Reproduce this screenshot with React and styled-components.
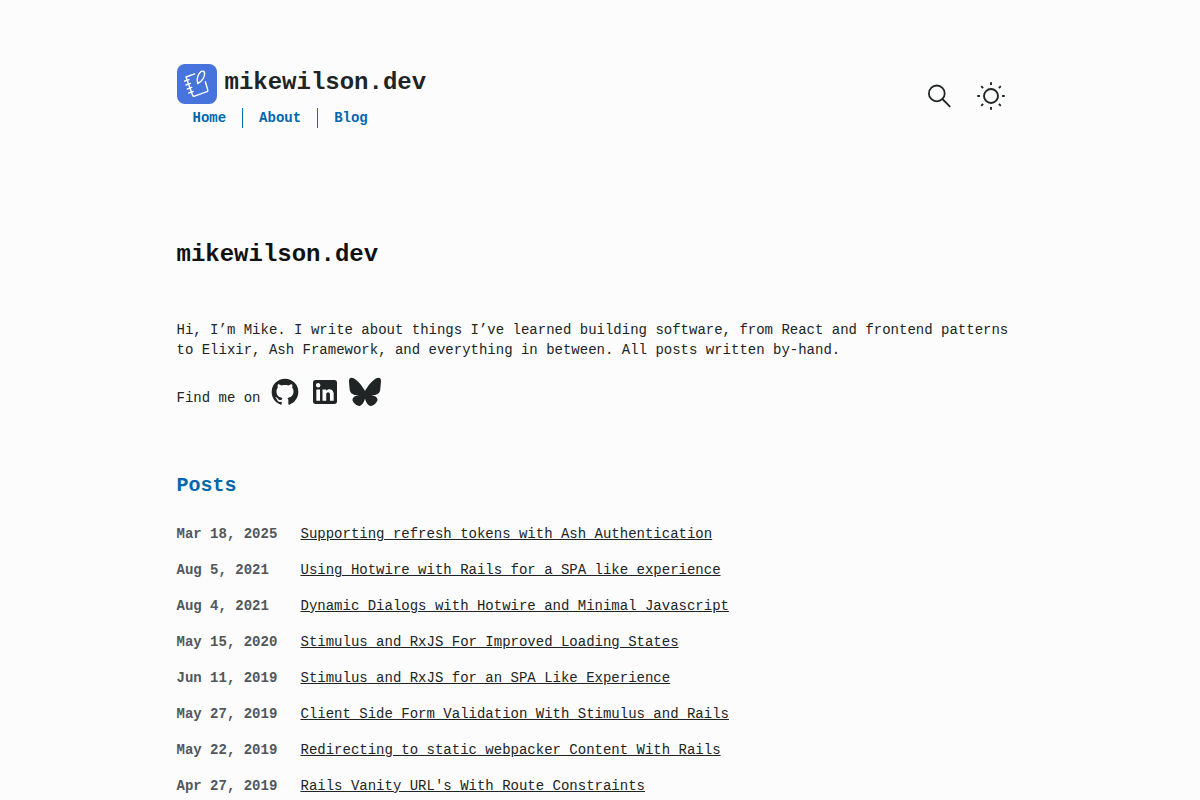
import React from 'react';
import styled, { createGlobalStyle } from 'styled-components';

const posts = [
  { date: 'Mar 18, 2025', title: 'Supporting refresh tokens with Ash Authentication' },
  { date: 'Aug 5, 2021', title: 'Using Hotwire with Rails for a SPA like experience' },
  { date: 'Aug 4, 2021', title: 'Dynamic Dialogs with Hotwire and Minimal Javascript' },
  { date: 'May 15, 2020', title: 'Stimulus and RxJS For Improved Loading States' },
  { date: 'Jun 11, 2019', title: 'Stimulus and RxJS for an SPA Like Experience' },
  { date: 'May 27, 2019', title: 'Client Side Form Validation With Stimulus and Rails' },
  { date: 'May 22, 2019', title: 'Redirecting to static webpacker Content With Rails' },
  { date: 'Apr 27, 2019', title: "Rails Vanity URL's With Route Constraints" },
];

const Logo = () => (
  <svg width="40" height="40" viewBox="0 0 40 40" fill="none">
    <rect width="40" height="40" rx="8" fill="#4674dc" />
    <g stroke="#fff" strokeWidth="1.4" strokeLinecap="round" strokeLinejoin="round">
      <path d="M17.6 9.9L9 13L15.6 31.2Q16.1 32.6 17.5 32.1L30 27.7Q31.2 27.2 30.8 26L28.3 17.8" />
      <path d="M7.6 17.2L12 15.6M9 21L13.4 19.4M10.4 25L14.8 23.4M11.8 29L16.2 27.4" />
      <path d="M20.8 19.6C19.2 15.6 20.8 9.8 24 7.6C25.6 6.6 27.4 7.2 27.6 9C28 12.6 25 17.8 20.8 19.6Z" />
    </g>
  </svg>
);

const SearchIcon = () => (
  <svg width="32" height="32" viewBox="0 0 32 32" fill="none" stroke="currentColor" strokeWidth="1.8">
    <circle cx="13.8" cy="13.4" r="7.9" />
    <path d="M19.4 19L27.2 26.8" />
  </svg>
);

const SunIcon = () => (
  <svg width="32" height="32" viewBox="0 0 32 32" fill="none" stroke="currentColor" strokeWidth="1.9">
    <circle cx="16" cy="16" r="7" />
    <path
      d="M16 2.3V4.9M16 27.1V29.7M2.3 16H4.9M27.1 16H29.7M6.2 6.2L8.1 8.1M23.9 23.9L25.8 25.8M6.2 25.8L8.1 23.9M23.9 8.1L25.8 6.2"
    />
  </svg>
);

const GithubIcon = () => (
  <svg width="32" height="32" viewBox="0 0 24 24" fill="currentColor">
    <path d="M12,2A10,10 0 0,0 2,12C2,16.42 4.87,20.17 8.84,21.5C9.34,21.58 9.5,21.27 9.5,21C9.5,20.77 9.5,20.14 9.5,19.31C6.73,19.91 6.14,17.97 6.14,17.97C5.68,16.81 5.03,16.5 5.03,16.5C4.12,15.88 5.1,15.9 5.1,15.9C6.1,15.97 6.63,16.93 6.63,16.93C7.5,18.45 8.97,18 9.54,17.76C9.63,17.11 9.89,16.67 10.17,16.42C7.95,16.17 5.62,15.31 5.62,11.5C5.62,10.39 6,9.5 6.65,8.79C6.55,8.54 6.2,7.5 6.75,6.15C6.75,6.15 7.59,5.88 9.5,7.17C10.29,6.95 11.15,6.84 12,6.84C12.85,6.84 13.71,6.95 14.5,7.17C16.41,5.88 17.25,6.15 17.25,6.15C17.8,7.5 17.45,8.54 17.35,8.79C18,9.5 18.38,10.39 18.38,11.5C18.38,15.32 16.04,16.16 13.81,16.41C14.17,16.72 14.5,17.33 14.5,18.26C14.5,19.6 14.5,20.68 14.5,21C14.5,21.27 14.66,21.59 15.17,21.5C19.14,20.16 22,16.42 22,12A10,10 0 0,0 12,2Z" />
  </svg>
);

const LinkedinIcon = () => (
  <svg width="32" height="32" viewBox="0 0 24 24" fill="currentColor">
    <path d="M19 3a2 2 0 0 1 2 2v14a2 2 0 0 1-2 2H5a2 2 0 0 1-2-2V5a2 2 0 0 1 2-2h14m-.5 15.5v-5.3a3.26 3.26 0 0 0-3.26-3.26c-.85 0-1.84.52-2.32 1.3v-1.11h-2.79v8.37h2.79v-4.93c0-.77.62-1.4 1.39-1.4a1.4 1.4 0 0 1 1.4 1.4v4.93h2.79M6.88 8.56a1.68 1.68 0 0 0 1.68-1.68c0-.93-.75-1.69-1.68-1.69a1.69 1.69 0 0 0-1.69 1.69c0 .93.76 1.68 1.69 1.68m1.39 9.94v-8.37H5.5v8.37h2.77z" />
  </svg>
);

const BlueskyIcon = () => (
  <svg width="32" height="32" viewBox="10 -22 580 580" fill="currentColor">
    <path d="m135.72 44.03c66.496 49.921 138.02 151.14 164.28 205.46 26.262-54.316 97.782-155.54 164.28-205.46 47.98-36.021 125.72-63.892 125.72 24.795 0 17.712-10.155 148.79-16.111 170.07-20.703 73.984-96.144 92.854-163.25 81.433 117.3 19.964 147.14 86.092 82.697 152.22-122.39 125.59-175.91-31.511-189.63-71.766-2.514-7.3797-3.6904-10.832-3.7077-7.8964-.0174-2.9357-1.1937.51669-3.7077 7.8964-13.714 40.255-67.233 197.36-189.63 71.766-64.444-66.128-34.605-132.26 82.697-152.22-67.108 11.421-142.55-7.4491-163.25-81.433-5.9562-21.282-16.111-152.36-16.111-170.07 0-88.687 77.742-60.816 125.72-24.795z" />
  </svg>
);

const App = () => {
  return (
    <>
      <GlobalStyle />
      <Page>
        <Header>
          <div>
            <Brand>
              <Logo />
              <span>mikewilson.dev</span>
            </Brand>
            <Nav>
              <NavLink href="#">Home</NavLink>
              <NavLink href="#">About</NavLink>
              <NavLink href="#">Blog</NavLink>
            </Nav>
          </div>
          <Actions>
            <IconButton aria-label="Search"><SearchIcon /></IconButton>
            <IconButton aria-label="Toggle theme"><SunIcon /></IconButton>
          </Actions>
        </Header>

        <main>
          <Title>mikewilson.dev</Title>
          <Intro>
            Hi, I’m Mike. I write about things I’ve learned building software, from React and
            frontend patterns to Elixir, Ash Framework, and everything in between. All posts
            written by-hand.
          </Intro>
          <Social>
            <span>Find me on</span>
            <SocialLinks>
              <a href="#" aria-label="GitHub"><GithubIcon /></a>
              <a href="#" aria-label="LinkedIn"><LinkedinIcon /></a>
              <a href="#" aria-label="Bluesky"><BlueskyIcon /></a>
            </SocialLinks>
          </Social>

          <SectionTitle>Posts</SectionTitle>
          <PostList>
            {posts.map(p => (
              <Post key={p.title}>
                <PostDate>{p.date}</PostDate>
                <PostLink href="#">{p.title}</PostLink>
              </Post>
            ))}
          </PostList>
        </main>
      </Page>
    </>
  );
}

const GlobalStyle = createGlobalStyle`
  * {
    box-sizing: border-box;
  }

  html {
    overflow: hidden;
  }

  body {
    margin: 0;
    height: 100vh;
    overflow: hidden;
    background: #fcfcfc;
    color: #202425;
    font: 14px/20px "Liberation Mono", monospace;
  }

  a {
    color: inherit;
  }

  svg {
    display: block;
  }
`;

const Page = styled.div`
  width: 847px;
  margin: 0 auto;
  padding-top: 64px;
`;

const Header = styled.header`
  display: flex;
  justify-content: space-between;
  align-items: center;
  height: 64px;
`;

const Brand = styled.div`
  display: flex;
  gap: 8px;
  height: 44px;
  font-size: 24px;
  line-height: 38px;
  font-weight: bold;
`;

const Nav = styled.nav`
  display: flex;
`;

const NavLink = styled.a`
  padding: 0 16px;
  color: #0067ad;
  font-weight: bold;
  text-decoration: none;

  & + & {
    border-left: 1px solid #0072b0;
  }
`;

const Actions = styled.div`
  display: flex;
  gap: 20px;
  padding-right: 16.5px;
`;

const IconButton = styled.button`
  padding: 0;
  border: 0;
  background: none;
  color: #202425;
`;

const Title = styled.h1`
  margin: 109px 0 0;
  color: #111;
  font-size: 24px;
  line-height: 36px;
`;

const Intro = styled.p`
  margin: 47px 0 16px;
`;

const Social = styled.div`
  display: flex;
  align-items: flex-end;
  gap: 8.5px;
  height: 32px;
`;

const SocialLinks = styled.div`
  display: flex;
  gap: 8px;
`;

const SectionTitle = styled.h2`
  margin: 63px 0 0;
  color: #0067ad;
  font-size: 20px;
  line-height: 30px;
`;

const PostList = styled.ul`
  display: flex;
  flex-direction: column;
  gap: 16px;
  margin: 23px 0 0;
  padding: 0;
  list-style: none;
`;

const Post = styled.li`
  display: flex;
`;

const PostDate = styled.span`
  width: 124px;
  color: #51575d;
  font-weight: bold;
`;

const PostLink = styled.a`
  text-decoration: underline;
`;

export default App;
